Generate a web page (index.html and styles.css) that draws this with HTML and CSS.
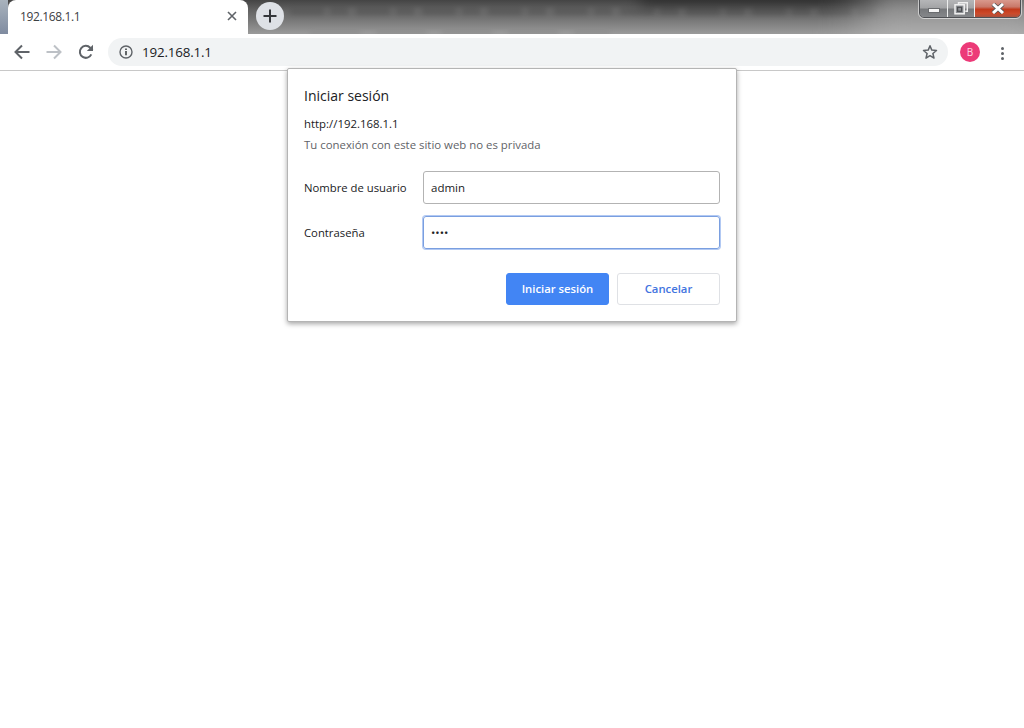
FILE: index.html
```html
<!DOCTYPE html>
<html lang="es">
<head>
<meta charset="utf-8">
<title>192.168.1.1</title>
<link rel="stylesheet" href="styles.css">
</head>
<body>
<header class="chrome">
  <div class="tabstrip">
    <div class="backdrop" aria-hidden="true">
      <div class="smear smear-a"></div>
      <div class="smear smear-b"></div>
      <div class="smear smear-c"></div>
    </div>
    <div class="tab">
      <span class="tab-title">192.168.1.1</span>
      <svg class="tab-close" width="10" height="10" viewBox="0 0 10 10"><path d="M1 1l8 8M9 1l-8 8" stroke="#5f6368" stroke-width="1.6" fill="none"/></svg>
    </div>
    <button class="newtab" aria-label="Nueva pestaña">
      <svg width="14" height="14" viewBox="0 0 14 14"><path d="M7 .5v13M.5 7h13" stroke="#35373b" stroke-width="2" fill="none"/></svg>
    </button>
    <div class="winctl">
      <div class="winbtn win-min"><span class="min-bar"></span></div>
      <div class="winbtn win-max">
        <svg width="14" height="13" viewBox="0 0 14 13"><path d="M4.5 2.5V.7h8.8v8.6h-2" fill="none" stroke="#eee" stroke-width="1.4"/><rect x="1" y="2.8" width="9.2" height="9" fill="#8d9094" stroke="#f2f2f2" stroke-width="1.5"/><rect x="3.6" y="5.3" width="4" height="4" fill="none" stroke="#4b4d50" stroke-width="1.2"/></svg>
      </div>
      <div class="winbtn win-close">
        <svg width="14" height="11" viewBox="0 0 14 11"><path d="M2 1l10 9M12 1L2 10" stroke="#555" stroke-width="4.4" fill="none"/><path d="M2 1l10 9M12 1L2 10" stroke="#fff" stroke-width="3" fill="none"/></svg>
      </div>
    </div>
  </div>
  <div class="toolbar">
    <div class="navs">
      <svg width="16" height="16" viewBox="0 0 16 16"><path d="M15.5 8H2M8 1.5L1.5 8 8 14.5" fill="none" stroke="#5f6368" stroke-width="2"/></svg>
      <svg width="16" height="16" viewBox="0 0 16 16"><path d="M.5 8H14M8 1.5L14.5 8 8 14.5" fill="none" stroke="#bdc1c6" stroke-width="2"/></svg>
      <svg width="16" height="16" viewBox="0 0 16 16"><path d="M13.3 10.4A6 6 0 1 1 12.2 3.7L14.6 6" fill="none" stroke="#5f6368" stroke-width="2"/><path d="M15 .8V7H8.8z" fill="#5f6368"/></svg>
    </div>
    <div class="omnibox">
      <svg width="14" height="14" viewBox="0 0 14 14"><circle cx="7" cy="7" r="6" fill="none" stroke="#5f6368" stroke-width="1.4"/><path d="M7 6v4.2" stroke="#3c4043" stroke-width="1.6"/><path d="M7 3.4v1.5" stroke="#3c4043" stroke-width="1.6"/></svg>
      <span class="url">192.168.1.1</span>
      <svg class="star" width="16" height="16" viewBox="0 0 16 16"><path d="M8 1.8l1.8 4.3 4.7.4-3.6 3 1.1 4.6L8 11.7l-4 2.4 1.1-4.6-3.6-3 4.7-.4z" fill="none" stroke="#5f6368" stroke-width="1.5" stroke-linejoin="round"/></svg>
    </div>
    <div class="avatar">B</div>
    <div class="menu"><i></i><i></i><i></i></div>
  </div>
</header>
<main class="page">
  <form class="dialog">
    <h1 class="dlg-title">Iniciar sesión</h1>
    <p class="dlg-origin">http://192.168.1.1</p>
    <p class="dlg-note">Tu conexión con este sitio web no es privada</p>
    <div class="fields">
      <label class="field-label">Nombre de usuario</label>
      <div class="input">admin</div>
      <label class="field-label">Contraseña</label>
      <div class="input input-focus">••••</div>
    </div>
    <div class="actions">
      <div class="btn btn-primary">Iniciar sesión</div>
      <div class="btn btn-cancel">Cancelar</div>
    </div>
  </form>
</main>
</body>
</html>
```
FILE: styles.css
```css
* { box-sizing: border-box; }
html, body { height: 100%; }
body {
  margin: 0;
  background: #fff;
  color: #202124;
  font-family: "Open Sans", "Noto Sans", sans-serif;
  overflow: hidden;
}
.chrome { display: block; }
.tabstrip {
  position: relative;
  height: 34px;
  display: flex;
  align-items: flex-start;
  padding-left: 8px;
  overflow: hidden;
  background: linear-gradient(#444 0, #626262 10px, #7c7c7c 22px, #9a9a9a 34px);
}
.backdrop { position: absolute; inset: 0; overflow: hidden; }
.backdrop::before {
  content: "";
  position: absolute;
  left: 0; top: 0; width: 8px; height: 34px;
  background: linear-gradient(#a9b3bd, #7f8ba0);
}
.backdrop::after {
  content: "";
  position: absolute;
  left: 860px; top: -14px; width: 190px; height: 70px;
  background: #c2c2c2;
  opacity: .55;
  filter: blur(22px);
}
.smear { position: absolute; filter: blur(2.5px); }
.smear-a {
  left: 290px; top: 8px; width: 590px; height: 7px;
  background: repeating-linear-gradient(90deg, #505050 0 34px, #6a6a6a 34px 40px, #525252 40px 58px, #6c6c6c 58px 66px);
  opacity: .5;
}
.smear-b {
  left: 640px; top: -7px; width: 240px; height: 12px;
  background: #222;
  opacity: .75;
  filter: blur(7px);
}
.smear-c {
  left: 310px; top: 32px; width: 300px; height: 3px;
  background: repeating-linear-gradient(90deg, #858585 0 50px, #9c9c9c 50px 66px);
  opacity: .7;
}
.tab {
  position: relative;
  width: 240px;
  height: 34px;
  background: #fff;
  border-radius: 8px 8px 0 0;
  display: flex;
  align-items: center;
  padding: 0 11px 2px 12px;
}
.tab-title { flex: 1; font-size: 12px; color: #3c4043; letter-spacing: -.38px; }
.tab-close { display: block; }
.newtab {
  position: relative;
  width: 28px;
  height: 28px;
  margin: 2px 0 0 8px;
  padding: 0;
  border: 0;
  border-radius: 50%;
  background: #dee1e6;
  display: flex;
  align-items: center;
  justify-content: center;
}
.winctl {
  position: absolute;
  right: 3px;
  top: -1px;
  width: 102px;
  height: 19px;
  display: flex;
  border: 1px solid #4e5054;
  outline: 1px solid rgba(255,255,255,.55);
  outline-offset: 0;
  border-radius: 0 0 5px 5px;
  overflow: hidden;
}
.winbtn { height: 100%; display: flex; align-items: center; justify-content: center; }
.win-min, .win-max {
  background: linear-gradient(#b5b6b8 0, #a3a4a6 45%, #77797c 55%, #85878a 100%);
  border-right: 1px solid #eceded;
}
.win-min { width: 28px; padding-top: 3px; }
.win-max { width: 27px; }
.win-close {
  flex: 1;
  background: linear-gradient(#d9998c 0, #c9796a 40%, #c23a1c 55%, #cc4a2a 80%, #a8523f 100%);
}
.min-bar {
  display: block;
  width: 12px;
  height: 5px;
  background: #f5f5f5;
  border: 1px solid #6a6c6f;
}
.toolbar {
  height: 37px;
  display: flex;
  align-items: flex-start;
  padding: 4px 0 0 14px;
  background: #fff;
  border-bottom: 1px solid #c8c8c8;
}
.navs { width: 94px; height: 28px; display: flex; align-items: center; gap: 16px; }
.navs svg { display: block; flex: none; }
.omnibox {
  width: 840px;
  height: 28px;
  border-radius: 14px;
  background: #f1f3f4;
  display: flex;
  align-items: center;
  padding: 0 10px 0 11px;
  gap: 9px;
}
.url { flex: 1; font-size: 13.4px; letter-spacing: -.18px; color: #202124; }
.star { display: block; }
.avatar {
  width: 20px;
  height: 20px;
  margin: 4px 0 0 12px;
  border-radius: 50%;
  background: #ec3a78;
  color: #ffd6e4;
  font-size: 10px;
  line-height: 20px;
  text-align: center;
}
.menu {
  margin: 9px 0 0 21px;
  width: 4px;
  display: flex;
  flex-direction: column;
  gap: 2px;
}
.menu i { display: block; width: 3px; height: 3px; border-radius: 50%; background: #5f6368; }
.page { position: relative; }
.dialog {
  position: absolute;
  left: 287px;
  top: -3px;
  width: 450px;
  height: 254px;
  padding: 15px 16px 16px;
  background: #fff;
  border: 1px solid #b4b4b4;
  border-radius: 2px;
  box-shadow: 0 2px 5px rgba(0,0,0,.35);
}
.dlg-title { margin: 0; font-size: 14px; font-weight: 400; line-height: 24px; color: #202124; }
.dlg-origin { margin: 7px 0 0; font-size: 11.4px; line-height: 18px; color: #202124; }
.dlg-note { margin: 3px 0 0; font-size: 11.4px; line-height: 18px; color: #5f6368; }
.fields {
  margin-top: 17px;
  display: grid;
  grid-template-columns: 119px 297px;
  row-gap: 12px;
  align-items: center;
}
.field-label { font-size: 11.3px; color: #202124; }
.input {
  height: 33px;
  border: 1px solid #b3b3b3;
  border-radius: 3px;
  padding: 0 7px;
  font-size: 11.5px;
  line-height: 31px;
  color: #202124;
}
.input-focus { border-color: #7a9fe0; box-shadow: 0 0 0 1px #b2c9f3; }
.actions { margin-top: 24px; display: flex; justify-content: flex-end; gap: 8px; }
.btn {
  width: 103px;
  height: 32px;
  border-radius: 3px;
  font-size: 11.3px;
  font-weight: 600;
  line-height: 30px;
  text-align: center;
}
.btn-primary { background: #4285f4; color: #fff; border: 1px solid #4285f4; }
.btn-cancel { background: #fff; color: #4274e0; border: 1px solid #dfe1e5; }
```
